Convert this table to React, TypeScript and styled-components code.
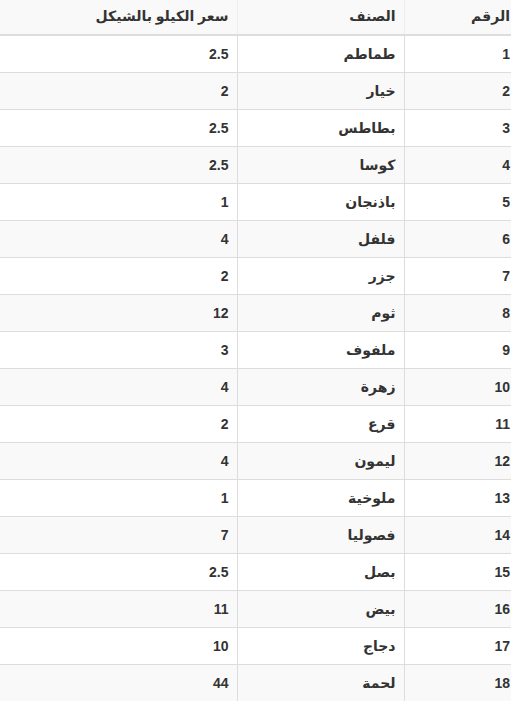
import React from 'react';
import styled, { createGlobalStyle } from 'styled-components';

const GlobalStyle = createGlobalStyle`
  html, body {
    margin: 0;
    padding: 0;
    background: #fff;
    overflow: hidden;
  }
  body {
    direction: rtl;
    font-family: "Liberation Sans", "DejaVu Sans", sans-serif;
    font-size: 14px;
    line-height: 20px;
    color: #333;
  }
`;

const Wrapper = styled.div`
  width: 511px;
  overflow: hidden;
`;

const Table = styled.table`
  table-layout: fixed;
  border-collapse: collapse;
  border-spacing: 0;
  width: 528px;
  margin: -2px -7px 0 0;
`;

const Row = styled.tr`
  &:nth-child(odd) {
    background: #f9f9f9;
  }
`;

const HeadCell = styled.th<{ $width?: number }>`
  box-sizing: border-box;
  width: ${({ $width }) => ($width ? `${$width}px` : 'auto')};
  padding: 8px;
  text-align: right;
  font-weight: bold;
  border-bottom: 2px solid #ddd;
  border-left: 1px solid #eee;
  &:last-child {
    border-left: none;
  }
`;

const Cell = styled.td`
  box-sizing: border-box;
  padding: 8px;
  text-align: right;
  font-weight: bold;
  border-top: 1px solid #ddd;
  border-left: 1px solid #ddd;
  &:last-child {
    border-left: none;
  }
`;

const items: [string, string][] = [
  ['طماطم', '2.5'],
  ['خيار', '2'],
  ['بطاطس', '2.5'],
  ['كوسا', '2.5'],
  ['باذنجان', '1'],
  ['فلفل', '4'],
  ['جزر', '2'],
  ['ثوم', '12'],
  ['ملفوف', '3'],
  ['زهرة', '4'],
  ['قرع', '2'],
  ['ليمون', '4'],
  ['ملوخية', '1'],
  ['فصوليا', '7'],
  ['بصل', '2.5'],
  ['بيض', '11'],
  ['دجاج', '10'],
  ['لحمة', '44'],
];

export default function App() {
  return (
    <>
      <GlobalStyle />
      <Wrapper>
        <Table>
          <tbody>
            <Row>
              <HeadCell $width={114}>الرقم</HeadCell>
              <HeadCell $width={167}>الصنف</HeadCell>
              <HeadCell>سعر الكيلو بالشيكل</HeadCell>
            </Row>
            {items.map(([name, price], index) => (
              <Row key={index}>
                <Cell>{index + 1}</Cell>
                <Cell>{name}</Cell>
                <Cell>{price}</Cell>
              </Row>
            ))}
          </tbody>
        </Table>
      </Wrapper>
    </>
  );
}
